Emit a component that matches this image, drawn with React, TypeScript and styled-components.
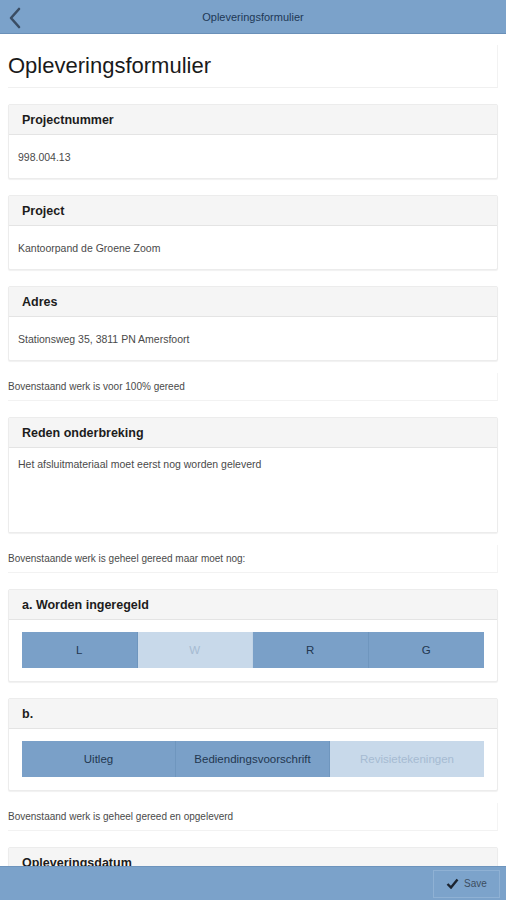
import React from 'react';
import styled, { createGlobalStyle } from 'styled-components';

const GlobalStyle = createGlobalStyle`
  html, body {
    margin: 0;
    padding: 0;
    background: #ffffff;
    font-family: "Liberation Sans", Arial, sans-serif;
  }
  * {
    box-sizing: border-box;
  }
`;

const Screen = styled.div`
  height: 100vh;
  display: flex;
  flex-direction: column;
  overflow: hidden;
`;

const TopBar = styled.header`
  height: 34px;
  flex-shrink: 0;
  background: #7ba2ca;
  border-bottom: 1px solid #6a90b8;
  display: flex;
  align-items: center;
  justify-content: center;
  position: relative;
`;

const BackButton = styled.button`
  position: absolute;
  left: 4px;
  top: 5px;
  width: 22px;
  height: 26px;
  border: none;
  background: transparent;
  padding: 0;
  display: flex;
  align-items: center;
  justify-content: center;
`;

const TopTitle = styled.div`
  font-size: 11px;
  color: #1e3856;
`;

const Content = styled.main`
  flex: 1;
  overflow: hidden;
  padding: 11px 8px 0;
  display: flex;
  flex-direction: column;
  gap: 16px;
`;

const TitlePanel = styled.div`
  height: 43px;
  display: flex;
  align-items: center;
  border-right: 1px solid #f2f2f2;
  border-bottom: 1px solid #f0f0f0;
  font-size: 22px;
  color: #1a1a1a;
  flex-shrink: 0;
`;

const Card = styled.section`
  flex-shrink: 0;
  border: 1px solid #ececec;
  border-radius: 2px;
  box-shadow: 0 1px 1px rgba(0, 0, 0, 0.06);
  background: #ffffff;
`;

const CardHeader = styled.div`
  height: 30px;
  background: #f5f5f5;
  border-bottom: 1px solid #e4e4e4;
  display: flex;
  align-items: center;
  padding: 0 13px;
  font-size: 12.5px;
  font-weight: bold;
  color: #1c1c1c;
`;

const CardBody = styled.div`
  height: 43px;
  display: flex;
  align-items: center;
  padding: 0 9px;
  font-size: 10.5px;
  color: #4a4a4a;
`;

const TextArea = styled.textarea`
  display: block;
  width: 100%;
  height: 84px;
  border: none;
  padding: 10px 9px;
  font-family: "Liberation Sans", Arial, sans-serif;
  font-size: 10.5px;
  color: #4a4a4a;
  resize: none;
  outline: none;
  background: #ffffff;
`;

const Note = styled.div`
  height: 28px;
  flex-shrink: 0;
  display: flex;
  align-items: center;
  margin-top: -4px;
  font-size: 10px;
  color: #4a4a4a;
  border-right: 1px solid #f4f4f4;
  border-bottom: 1px solid #f2f2f2;
`;

const SegmentBody = styled.div`
  padding: 12px 13px 13px;
`;

const Segments = styled.div<{ $count: number }>`
  display: grid;
  grid-template-columns: repeat(${p => p.$count}, 1fr);
  height: 36px;
`;

const Segment = styled.button<{ $on: boolean }>`
  border: none;
  border-right: 1px solid ${p => (p.$on ? '#6f96be' : '#c2d4e6')};
  background: ${p => (p.$on ? '#7aa0c8' : '#c8d9ea')};
  color: ${p => (p.$on ? '#233750' : '#a6bbd2')};
  font-family: "Liberation Sans", Arial, sans-serif;
  font-size: 11.5px;
  padding: 0;
  &:last-child {
    border-right: none;
  }
`;

const PartialCard = styled(Card)`
  height: 40px;
`;

const BottomBar = styled.footer`
  height: 34px;
  flex-shrink: 0;
  background: #7ba2ca;
  border-top: 1px solid #6d94bd;
  display: flex;
  align-items: center;
  justify-content: flex-end;
  padding-right: 6px;
`;

const SaveButton = styled.button`
  height: 28px;
  width: 67px;
  border: 1px solid #8fb1d4;
  background: #7ca3cb;
  display: flex;
  align-items: center;
  justify-content: center;
  gap: 5px;
  font-family: "Liberation Sans", Arial, sans-serif;
  font-size: 10px;
  color: #3c4d60;
  padding: 0;
`;

const App: React.FC = () => {
  const ingeregeld = [
    { label: 'L', on: true },
    { label: 'W', on: false },
    { label: 'R', on: true },
    { label: 'G', on: true },
  ];
  const overig = [
    { label: 'Uitleg', on: true },
    { label: 'Bediendingsvoorschrift', on: true },
    { label: 'Revisietekeningen', on: false },
  ];

  return (
    <Screen>
      <GlobalStyle />
      <TopBar>
        <BackButton aria-label="Terug">
          <svg width="14" height="22" viewBox="0 0 14 22">
            <path d="M11 2 L3 11 L11 20" fill="none" stroke="#3a4d63" strokeWidth="2.6" strokeLinecap="round" strokeLinejoin="round" />
          </svg>
        </BackButton>
        <TopTitle>Opleveringsformulier</TopTitle>
      </TopBar>

      <Content>
        <TitlePanel>Opleveringsformulier</TitlePanel>

        <Card>
          <CardHeader>Projectnummer</CardHeader>
          <CardBody>998.004.13</CardBody>
        </Card>

        <Card>
          <CardHeader>Project</CardHeader>
          <CardBody>Kantoorpand de Groene Zoom</CardBody>
        </Card>

        <Card>
          <CardHeader>Adres</CardHeader>
          <CardBody>Stationsweg 35, 3811 PN Amersfoort</CardBody>
        </Card>

        <Note>Bovenstaand werk is voor 100% gereed</Note>

        <Card>
          <CardHeader>Reden onderbreking</CardHeader>
          <TextArea readOnly defaultValue="Het afsluitmateriaal moet eerst nog worden geleverd" />
        </Card>

        <Note>Bovenstaande werk is geheel gereed maar moet nog:</Note>

        <Card>
          <CardHeader>a. Worden ingeregeld</CardHeader>
          <SegmentBody>
            <Segments $count={ingeregeld.length}>
              {ingeregeld.map(s => (
                <Segment key={s.label} $on={s.on}>{s.label}</Segment>
              ))}
            </Segments>
          </SegmentBody>
        </Card>

        <Card>
          <CardHeader>b.</CardHeader>
          <SegmentBody>
            <Segments $count={overig.length}>
              {overig.map(s => (
                <Segment key={s.label} $on={s.on}>{s.label}</Segment>
              ))}
            </Segments>
          </SegmentBody>
        </Card>

        <Note>Bovenstaand werk is geheel gereed en opgeleverd</Note>

        <PartialCard>
          <CardHeader>Opleveringsdatum</CardHeader>
        </PartialCard>
      </Content>

      <BottomBar>
        <SaveButton>
          <svg width="13" height="11" viewBox="0 0 13 11">
            <path d="M1.5 6 L5 9.5 L11.5 1.5" fill="none" stroke="#1c2430" strokeWidth="2.4" strokeLinejoin="miter" />
          </svg>
          Save
        </SaveButton>
      </BottomBar>
    </Screen>
  );
};

export default App;
